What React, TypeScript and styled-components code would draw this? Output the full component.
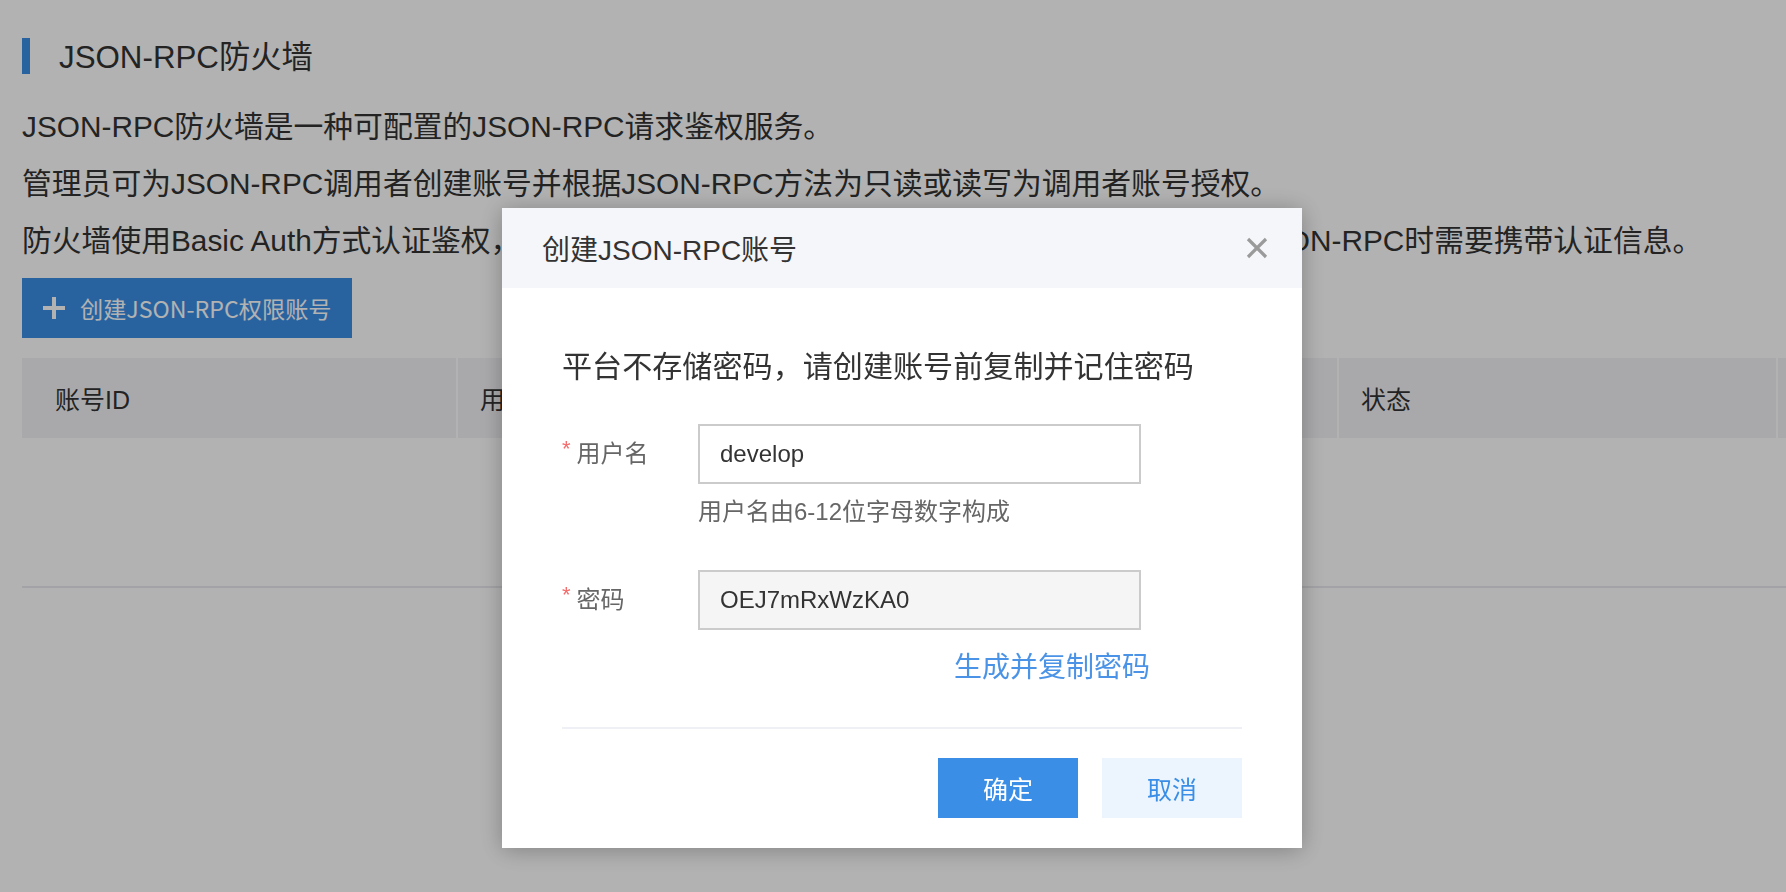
import styled, { createGlobalStyle } from 'styled-components'

const FONT = `"Liberation Sans", "Noto Sans CJK SC", sans-serif`
const CJK_FONT = `"Noto Sans CJK SC", sans-serif`

const GlobalStyle = createGlobalStyle`
  html, body {
    margin: 0;
    padding: 0;
    background: #fff;
    font-family: ${FONT};
    color: #333;
    overflow: hidden;
  }
`

const Page = styled.div`
  width: 1786px;
  height: 892px;
  padding: 38px 0 0 22px;
  box-sizing: border-box;
  overflow: hidden;
`

const SectionTitle = styled.div`
  display: flex;
  align-items: center;
  gap: 29px;
  height: 36px;
  font-size: 31.3px;
  color: #333;

  span:last-child {
    transform: translateY(-2px);
  }
`

const TitleBar = styled.span`
  width: 8px;
  height: 36px;
  background: #3a8ee6;
`

const Intro = styled.div`
  margin-top: 24px;
  font-size: 29.8px;
  line-height: 57px;
  color: #333;

  p {
    margin: 0;
    white-space: nowrap;
  }
`

const CreateButton = styled.button`
  margin-top: 9px;
  height: 60px;
  width: 330px;
  display: flex;
  align-items: center;
  gap: 14px;
  padding: 0 0 0 20px;
  border: none;
  background: #3a8ee6;
  color: #fff;
  font-family: ${CJK_FONT};
  font-size: 23.2px;
  white-space: nowrap;
  cursor: pointer;
`

const Table = styled.div`
  margin-top: 20px;
  width: 2200px;
  border-bottom: 2px solid #eaeaef;
`

const HeaderRow = styled.div`
  display: grid;
  grid-template-columns: 436px 440px 441px 439px 440px;
  height: 80px;
  background: #f3f3f6;
`

const HeaderCell = styled.div<{ $first?: boolean }>`
  display: flex;
  align-items: center;
  padding-left: ${p => (p.$first ? '33px' : '22px')};
  border-right: 2px solid #fff;
  font-size: 25px;
  color: #333;
`

const TableBody = styled.div`
  height: 148px;
`

const Mask = styled.div`
  position: fixed;
  inset: 0;
  background: rgba(0, 0, 0, 0.3);
`

const Dialog = styled.div`
  position: fixed;
  left: 502px;
  top: 208px;
  width: 800px;
  background: #fff;
  box-shadow: 0 2px 22px rgba(0, 0, 0, 0.28);
`

const DialogHeader = styled.div`
  height: 80px;
  display: flex;
  align-items: center;
  justify-content: space-between;
  padding: 0 34px 0 40px;
  background: #f5f6fa;
  font-size: 28px;
  color: #333;
`

const CloseIcon = styled.svg`
  width: 22px;
  height: 22px;
  display: block;
  cursor: pointer;
`

const DialogBody = styled.div`
  padding: 59px 60px 30px;
`

const Notice = styled.div`
  font-size: 30.1px;
  line-height: 40px;
  color: #333;
  white-space: nowrap;
`

const FormRow = styled.div<{ $top: number }>`
  display: flex;
  align-items: center;
  margin-top: ${p => p.$top}px;
`

const Label = styled.label`
  width: 136px;
  display: flex;
  align-items: center;
  margin-bottom: 6px;
  font-size: 24px;
  color: #666;
`

const Required = styled.span`
  color: #f56c6c;
  font-size: 22px;
  margin-right: 6px;
  transform: translateY(-2px);
`

const Input = styled.input<{ $readOnly?: boolean }>`
  width: 443px;
  height: 60px;
  box-sizing: border-box;
  padding: 0 20px;
  border: 2px solid #cbcbcb;
  background: ${p => (p.$readOnly ? '#f5f5f5' : '#fff')};
  font-family: ${FONT};
  font-size: 24px;
  color: #333;
  outline: none;
`

const Hint = styled.div`
  margin: 13px 0 0 136px;
  font-size: 24px;
  line-height: 30px;
  color: #666;
`

const LinkText = styled.a`
  display: block;
  margin: 20px 0 0 392px;
  font-size: 28px;
  line-height: 36px;
  color: #4a93e6;
  text-decoration: none;
  white-space: nowrap;
  cursor: pointer;
`

const Divider = styled.div`
  margin-top: 41px;
  height: 2px;
  background: #eef0f5;
`

const Footer = styled.div`
  display: flex;
  justify-content: flex-end;
  gap: 24px;
  margin-top: 29px;
`

const FooterButton = styled.button<{ $primary?: boolean }>`
  width: 140px;
  height: 60px;
  border: none;
  font-family: ${FONT};
  font-size: 25px;
  background: ${p => (p.$primary ? '#3a8ee6' : '#ecf5fe')};
  color: ${p => (p.$primary ? '#fff' : '#3a8ee6')};
  cursor: pointer;
`

const columns = ['账号ID', '用户名', '权限', '状态', '']

export default function App() {
  return (
    <>
      <GlobalStyle />
      <Page>
        <SectionTitle>
          <TitleBar />
          <span>JSON-RPC防火墙</span>
        </SectionTitle>
        <Intro>
          <p>JSON-RPC防火墙是一种可配置的JSON-RPC请求鉴权服务。</p>
          <p>管理员可为JSON-RPC调用者创建账号并根据JSON-RPC方法为只读或读写为调用者账号授权。</p>
          <p>防火墙使用Basic Auth方式认证鉴权，调用者需使用用户名和密码生成认证信息, 在访问节点的JSON-RPC时需要携带认证信息。</p>
        </Intro>
        <CreateButton>
          <svg width="24" height="24" viewBox="0 0 24 24">
            <path d="M12 1v22M1 12h22" stroke="#fff" strokeWidth="4" />
          </svg>
          创建JSON-RPC权限账号
        </CreateButton>
        <Table>
          <HeaderRow>
            {columns.map((c, i) => (
              <HeaderCell key={i} $first={i === 0}>
                {c}
              </HeaderCell>
            ))}
          </HeaderRow>
          <TableBody />
        </Table>
      </Page>
      <Mask />
      <Dialog>
        <DialogHeader>
          创建JSON-RPC账号
          <CloseIcon viewBox="0 0 22 22">
            <path d="M2 2l18 18M20 2L2 20" stroke="#9a9a9a" strokeWidth="3.2" />
          </CloseIcon>
        </DialogHeader>
        <DialogBody>
          <Notice>平台不存储密码，请创建账号前复制并记住密码</Notice>
          <FormRow $top={37}>
            <Label>
              <Required>*</Required>用户名
            </Label>
            <Input defaultValue="develop" />
          </FormRow>
          <Hint>用户名由6-12位字母数字构成</Hint>
          <FormRow $top={43}>
            <Label>
              <Required>*</Required>密码
            </Label>
            <Input $readOnly readOnly value="OEJ7mRxWzKA0" />
          </FormRow>
          <LinkText>生成并复制密码</LinkText>
          <Divider />
          <Footer>
            <FooterButton $primary>确定</FooterButton>
            <FooterButton>取消</FooterButton>
          </Footer>
        </DialogBody>
      </Dialog>
    </>
  )
}
